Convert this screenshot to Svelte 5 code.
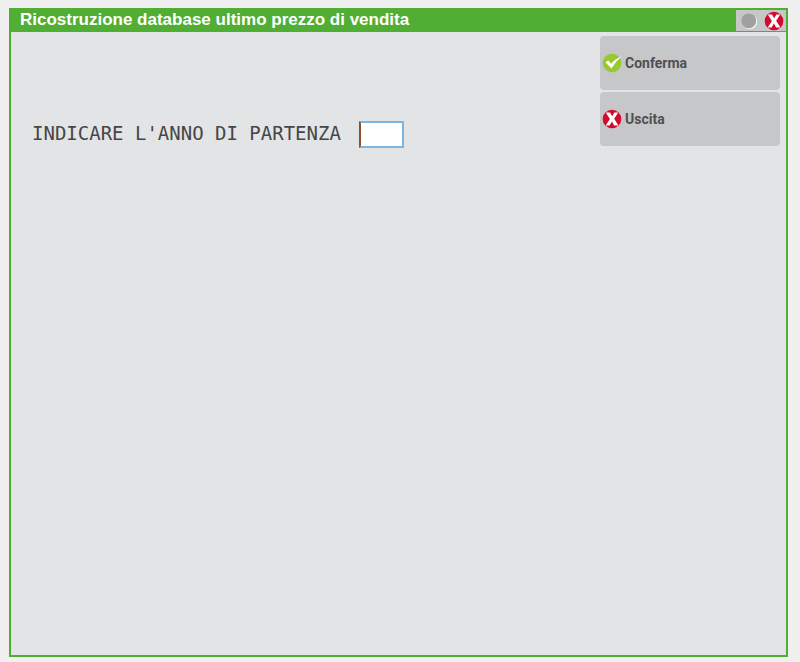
<script>
  let anno = ''
</script>

<div class="window">
  <header>
    <h1>Ricostruzione database ultimo prezzo di vendita</h1>
    <div class="controls">
      <button type="button" aria-label="Stato">
        <svg viewBox="0 0 20 20">
          <circle cx="10.8" cy="10.8" r="7.4" fill="#f4f4f4" />
          <circle cx="9.800" cy="9.800" r="7.4" fill="#a0a0a0" />
        </svg>
      </button>
      <button type="button" aria-label="Chiudi">
        <svg viewBox="0 0 20 20">
          <circle cx="10" cy="10" r="9.3" fill="#d30a2e" />
          <path d="M3.800 3.600H8L10.200 7.300L12.400 3.600H16.200L12.200 9.800L16.400 16.400H12.200L9.900 12.500L7.600 16.400H3.700L7.900 9.900Z" fill="#fff" />
        </svg>
      </button>
    </div>
  </header>

  <form class="content">
    <div class="field">
      <label for="anno">INDICARE L'ANNO DI PARTENZA</label>
      <input id="anno" type="text" maxlength="4" bind:value={anno} />
    </div>

    <div class="actions">
      <button type="button">
        <svg viewBox="0 0 20 20">
          <circle cx="10" cy="10" r="9.3" fill="#97c92f" />
          <path d="M3.400 9.300L6.200 7.400L9.100 10.800Q13 6 19.300 3.800Q13.500 8.500 9.500 15.400Z" fill="#fff" />
        </svg>
        Conferma
      </button>
      <button type="button">
        <svg viewBox="0 0 20 20">
          <circle cx="10" cy="10" r="9.3" fill="#d30a2e" />
          <path d="M3.800 3.600H8L10.200 7.300L12.400 3.600H16.200L12.200 9.800L16.400 16.400H12.200L9.900 12.500L7.600 16.400H3.700L7.900 9.900Z" fill="#fff" />
        </svg>
        Uscita
      </button>
    </div>
  </form>
</div>

<style>
  :global(body) {
    background: #f0f0f0;
  }
  :global(#app) {
    display: flex;
    min-height: 100vh;
  }
  .window {
    flex: 1;
    display: flex;
    flex-direction: column;
    margin: 8px 12px 5px 9px;
    border: 2px solid #4fae33;
    background: #e2e4e6;
    font-family: "Liberation Sans", Arial, sans-serif;
  }
  header {
    display: flex;
    box-sizing: border-box;
    justify-content: space-between;
    height: 22px;
    background: #4fae33;
    border-bottom: 1px solid #4fae33;
  }
  h1 {
    margin: 0;
    padding-left: 9px;
    font-size: 17px;
    line-height: 20px;
    font-weight: bold;
    color: #fff;
  }
  .controls {
    display: flex;
    align-items: center;
    gap: 5px;
    padding: 0 2px 0 3px;
    background: #c6c7c8;
  }
  button {
    border: 0;
    padding: 0;
    background: none;
    cursor: pointer;
  }
  svg {
    display: block;
    flex: none;
    width: 20px;
    height: 20px;
  }
  .content {
    flex: 1;
    display: flex;
    justify-content: space-between;
    align-items: flex-start;
    padding: 4px 6px 4px 21px;
  }
  .field {
    display: flex;
    align-items: flex-start;
    gap: 18px;
    margin-top: 85px;
  }
  label {
    font-family: "DejaVu Sans Mono", monospace;
    font-size: 19px;
    line-height: 24px;
    color: #464646;
  }
  input {
    box-sizing: border-box;
    width: 45px;
    height: 27px;
    padding: 0 2px;
    border: 2px solid #7db4e2;
    border-left-color: #8a4f2c;
    background: #fff;
    font-family: "DejaVu Sans Mono", monospace;
    font-size: 14px;
    outline: none;
  }
  .actions {
    display: flex;
    flex-direction: column;
    gap: 2px;
    width: 180px;
  }
  .actions button {
    display: flex;
    align-items: center;
    gap: 3px;
    height: 54px;
    padding: 0 2px;
    border-radius: 4px;
    background: #c6c7c8;
    font-family: Roboto, "Arial Narrow", sans-serif;
    font-size: 14px;
    font-weight: bold;
    color: #505050;
  }
</style>
